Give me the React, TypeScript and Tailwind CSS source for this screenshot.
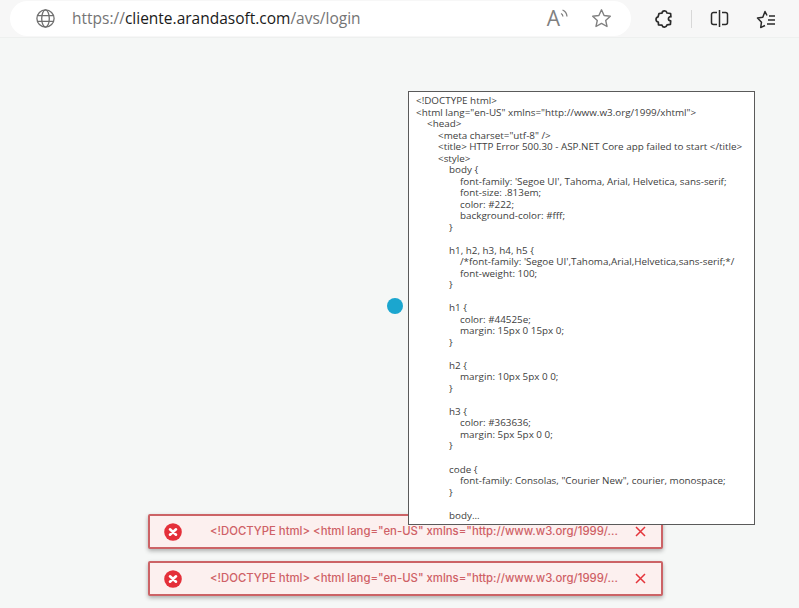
const INDENT = ['pl-0', 'pl-[11px]', 'pl-[22px]', 'pl-[33px]', 'pl-[44px]'];

const LINES: [number, string][] = [
  [0, '<!DOCTYPE html>'],
  [0, '<html lang="en-US" xmlns="http://www.w3.org/1999/xhtml">'],
  [1, '<head>'],
  [2, '<meta charset="utf-8" />'],
  [2, '<title> HTTP Error 500.30 - ASP.NET Core app failed to start </title>'],
  [2, '<style>'],
  [3, 'body {'],
  [4, "font-family: 'Segoe UI', Tahoma, Arial, Helvetica, sans-serif;"],
  [4, 'font-size: .813em;'],
  [4, 'color: #222;'],
  [4, 'background-color: #fff;'],
  [3, '}'],
  [3, ''],
  [3, 'h1, h2, h3, h4, h5 {'],
  [4, "/*font-family: 'Segoe UI',Tahoma,Arial,Helvetica,sans-serif;*/"],
  [4, 'font-weight: 100;'],
  [3, '}'],
  [3, ''],
  [3, 'h1 {'],
  [4, 'color: #44525e;'],
  [4, 'margin: 15px 0 15px 0;'],
  [3, '}'],
  [3, ''],
  [3, 'h2 {'],
  [4, 'margin: 10px 5px 0 0;'],
  [3, '}'],
  [3, ''],
  [3, 'h3 {'],
  [4, 'color: #363636;'],
  [4, 'margin: 5px 5px 0 0;'],
  [3, '}'],
  [3, ''],
  [3, 'code {'],
  [4, 'font-family: Consolas, "Courier New", courier, monospace;'],
  [3, '}'],
  [3, ''],
  [3, 'body...'],
];

const TOAST_TEXT = '<!DOCTYPE html> <html lang="en-US" xmlns="http://www.w3.org/1999/...';

function Toast() {
  return (
    <div className="flex h-[35px] w-[515px] items-center rounded-[2px] border-2 border-[#cc6366] bg-[#fcf0ef] shadow-[0_2px_4px_rgba(0,0,0,0.3)]">
      <svg className="ml-[14px] h-[18px] w-[18px] shrink-0" viewBox="0 0 18 18">
        <circle cx="9" cy="9" r="8.8" fill="#e4303a" />
        <path d="M6 6.300l6 5.400M12 6.300l-6 5.400" stroke="#fff" strokeWidth="2.6" strokeLinecap="round" />
      </svg>
      <span className="ml-[28px] w-[410px] whitespace-nowrap font-['Inter',sans-serif] text-[11.35px] font-medium text-[#cf6166]">
        {TOAST_TEXT}
      </span>
      <svg className="ml-[15px] h-[11px] w-[11px] shrink-0" viewBox="0 0 11 11">
        <path d="M1 1l9 9M10 1l-9 9" stroke="#e4353b" strokeWidth="1.5" />
      </svg>
    </div>
  );
}

export default function App() {
  return (
    <div className="relative h-[608px] w-[799px] overflow-hidden bg-[#f5f7f6]">
      {/* Browser bar */}
      <div className="flex h-[38px] items-center border-b border-[#eef0ef] bg-[#f7f7f7] pl-[10px]">
        <div className="flex h-[35px] w-[621px] items-center rounded-full bg-white pl-[26px]">
          <svg className="h-[19px] w-[19px] text-[#6f6f6f]" fill="none" viewBox="0 0 19 19" stroke="currentColor" strokeWidth={1.3}>
            <circle cx="9.500" cy="9.500" r="8.600" />
            <ellipse cx="9.500" cy="9.500" rx="3.800" ry="8.600" />
            <path d="M1.500 6.600h16M1.500 12.400h16" />
          </svg>
          <span className="ml-[17px] whitespace-nowrap font-['Open_Sans',sans-serif] text-[15.5px] text-[#757575]">
            https://<span className="text-[#1a1a1a]">cliente.arandasoft.com</span>/avs/login
          </span>
          <span className="ml-auto mr-[10px] flex items-center text-[#808080]">
            <span className="font-['Open_Sans',sans-serif] text-[21px] leading-none">A</span>
            <svg className="mb-[9px] h-[12px] w-[9px]" fill="none" viewBox="0 0 9 12" stroke="currentColor" strokeWidth={1.3}>
              <path d="M1 5.500c1.200.5 1.800 1.500 1.900 3M2.500 2c2.600 1 4.200 3.200 4.500 6.500" />
            </svg>
          </span>
          <svg className="ml-[12px] mr-[19px] h-[21px] w-[21px] text-[#808080]" fill="none" viewBox="0 0 21 21" stroke="currentColor" strokeWidth={1.4}>
            <path strokeLinejoin="round" d="M10.500 1.800l2.600 5.700 6.200.7-4.600 4.200 1.300 6.100-5.500-3.100-5.500 3.100 1.300-6.100L1.700 8.200l6.200-.7z" />
          </svg>
        </div>
        <svg className="ml-[23px] h-[20px] w-[20px] text-[#2b2b2b]" fill="none" viewBox="0 0 20 20" stroke="currentColor" strokeWidth={1.7}>
          <path strokeLinejoin="round" d="M5 4.500l3-.3C8.300 1.400 12.300 1 13 4l3.600.5.300 3.300c-2.700-.8-3.700 4-.2 4.100l-.3 3.500-3.300.4c-.8 2.900-4.300 3.100-5.100.4l-3.500-.3-.2-2.800c-3-.6-3-4.700-.2-5.300z" />
        </svg>
        <div className="ml-[17px] h-[18px] w-px bg-[#d8d8d8]" />
        <svg className="ml-[18px] h-[19px] w-[19px] text-[#2b2b2b]" fill="none" viewBox="0 0 19 19" stroke="currentColor" strokeWidth={1.500}>
          <path d="M7 3.500H3.500a2 2 0 00-2 2v8a2 2 0 002 2H7M12 3.500h3.500a2 2 0 012 2v8a2 2 0 01-2 2H12M9.500 1v17" />
        </svg>
        <svg className="ml-[27px] h-[20px] w-[20px] text-[#2b2b2b]" fill="none" viewBox="0 0 20 20" stroke="currentColor" strokeWidth={1.500}>
          <path strokeLinejoin="round" d="M9 16.500l-4.300 2 .8-5.300L1.500 9l5.300-.8L9 2.500l2 4" />
          <path d="M13 7h6M12 11h7M11 15h8" />
        </svg>
      </div>

      {/* Blue dot */}
      <div className="absolute left-[387px] top-[298px] h-4 w-4 rounded-full bg-[#1ba6cf]" />

      {/* Toasts */}
      <div className="absolute left-[148px] top-[514px] flex flex-col gap-[12px]">
        <Toast />
        <Toast />
      </div>

      {/* Tooltip */}
      <div className="absolute left-[408px] top-[91px] z-10 h-[434px] w-[347px] border border-[#5a5a5a] bg-white pl-[7px] pt-[3px] font-['Open_Sans',sans-serif] text-[9.85px] leading-[11.53px] text-[#404040]">
        {LINES.map(([level, text], i) => (
          <div key={i} className={`h-[11.53px] whitespace-pre ${INDENT[level]}`}>
            {text}
          </div>
        ))}
      </div>
    </div>
  );
}
